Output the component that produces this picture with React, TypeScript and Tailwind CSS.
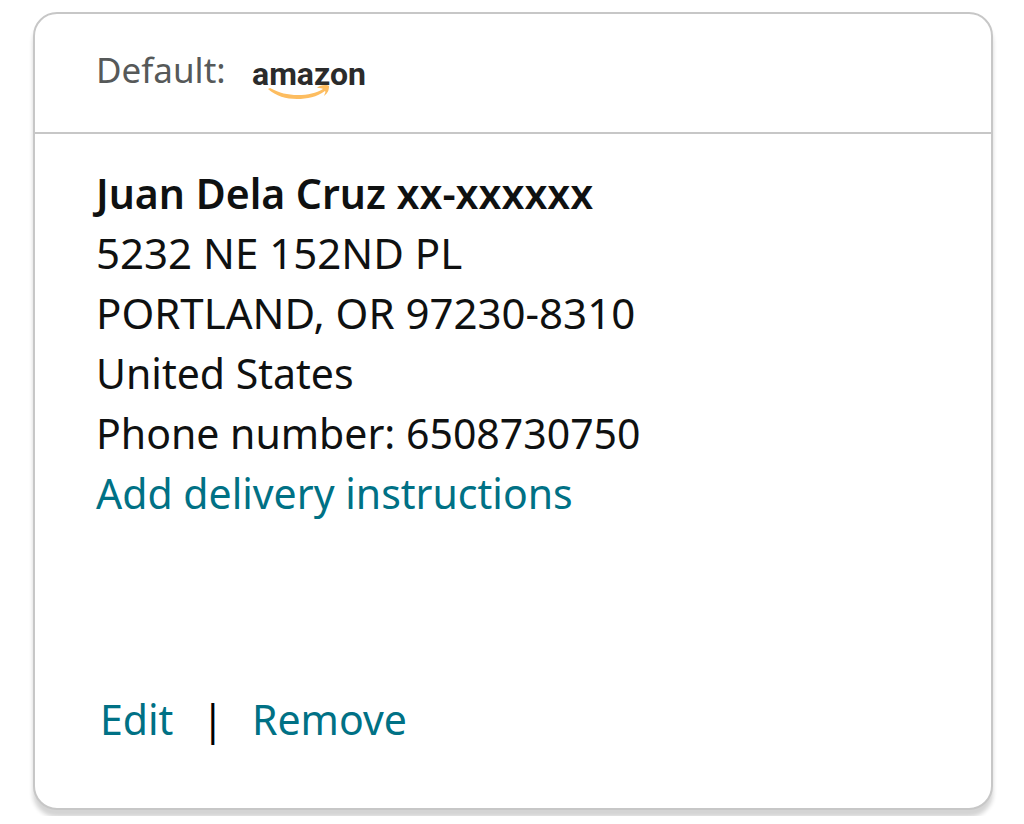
const address = {
  name: 'Juan Dela Cruz xx-xxxxxx',
  street: ['5232 NE 152ND PL', 'PORTLAND, OR 97230-8310'],
  contact: ['United States', 'Phone number: 6508730750'],
};

const linkClass = 'text-[#007185] hover:underline';

function AmazonLogo() {
  return (
    <svg width="120" height="50" viewBox="0 -8 120 50" role="img" aria-label="amazon" className="overflow-visible">
      <text
        x="0"
        y="27"
        fill="#2b2b2b"
        className="font-[Roboto,sans-serif] text-[32px] font-bold"
      >
        amazon
      </text>
      <path
        d="M18 30 C28 35 35 37 46 37 C56 37 64 35 71 31 C70 30 68 30 65 30 C67 27 75 26 77 28 C77 32 76 35 72 38 C73 35 74 34 73 33 C65 39 55 41 45 41 C34 41 24 38 16 31 Z"
        fill="#fdbd60"
      />
    </svg>
  );
}

export default function App() {
  return (
    <main className="overflow-hidden bg-white pt-3 pr-[31px] pb-[6px] pl-[33px] font-['Noto_Sans',sans-serif] text-[#0f1111]">
      <section className="flex min-h-[798px] flex-col rounded-[24px] border-2 border-[#c7c7c7] bg-white shadow-[0_7px_4px_rgba(15,17,17,0.18)]">
        <header className="flex h-[120px] items-center gap-[26px] border-b-2 border-[#c7c7c7] px-[61px] pb-1">
          <span className="pb-0.5 text-[35px] leading-[48px] text-[#565959]">Default:</span>
          <div className="pt-2">
            <AmazonLogo />
          </div>
        </header>

        <div className="flex flex-1 flex-col justify-between px-[61px] pt-[29px] pb-[59px]">
          <address className="text-[41px] leading-[60px] not-italic">
            <h1 className="font-semibold">{address.name}</h1>
            <div className="text-[42px]">
              {address.street.map((line) => (
                <p key={line}>{line}</p>
              ))}
            </div>
            {address.contact.map((line) => (
              <p key={line}>{line}</p>
            ))}
            <a href="#instructions" className={linkClass}>
              Add delivery instructions
            </a>
          </address>

          <div className="flex items-center pl-1 text-[41px] leading-[60px]">
            <a href="#edit" className={linkClass}>
              Edit
            </a>
            <span className="mx-7 text-black">|</span>
            <a href="#remove" className={linkClass}>
              Remove
            </a>
          </div>
        </div>
      </section>
    </main>
  );
}
